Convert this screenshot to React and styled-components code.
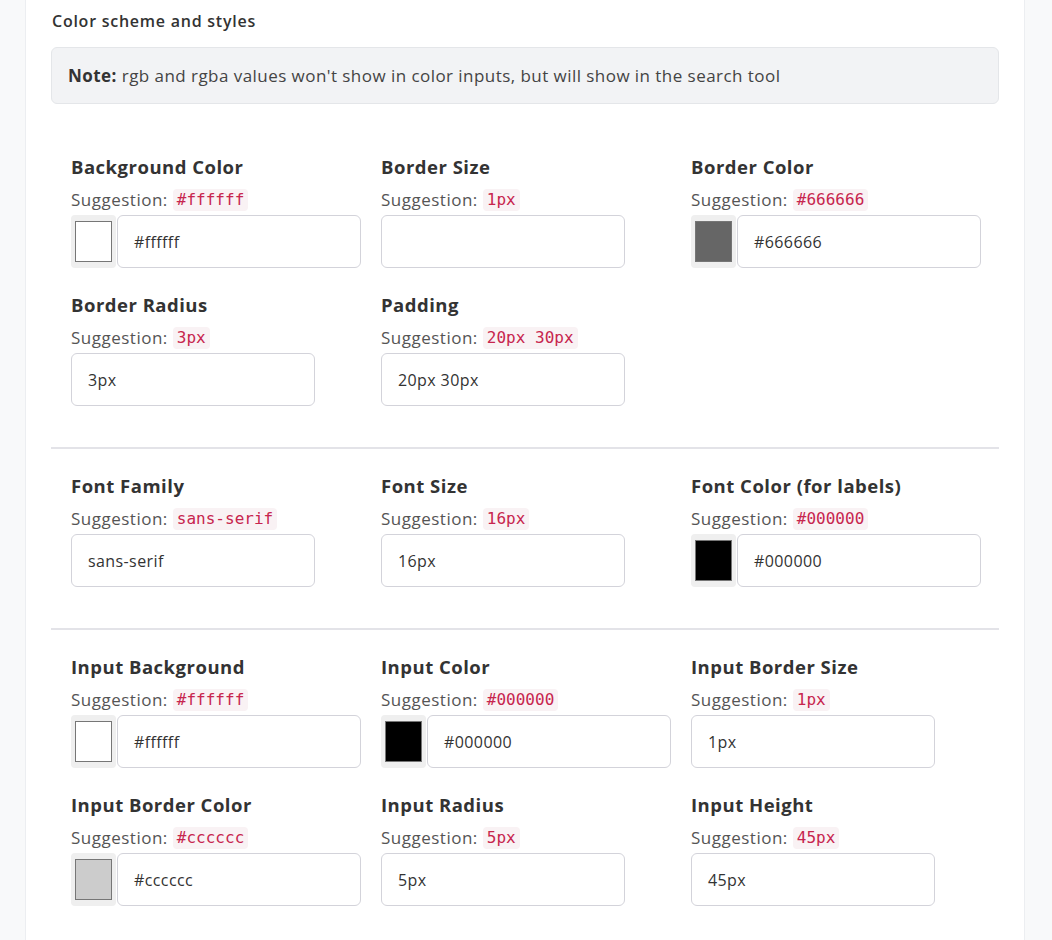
import styled, { createGlobalStyle } from "styled-components";

const GlobalStyle = createGlobalStyle`
  body {
    margin: 0;
    background: #f8f9fa;
    font-family: "Open Sans", "Liberation Sans", sans-serif;
    color: #333;
  }
`;

const Card = styled.div`
  margin-left: 25px;
  width: 1000px;
  min-height: 940px;
  box-sizing: border-box;
  background: #fff;
  border-left: 1px solid #eceef1;
  border-right: 1px solid #eceef1;
  padding: 9px 25px 0 25px;
`;

const Heading = styled.h3`
  margin: 0 0 14px 1px;
  font-size: 16px;
  line-height: 24px;
  font-weight: 600;
  letter-spacing: 0.75px;
  color: #333;
`;

const Note = styled.div`
  background: #f2f3f5;
  border: 1px solid #e4e6e9;
  border-radius: 6px;
  padding: 15px 16px;
  font-size: 17px;
  line-height: 25px;
  letter-spacing: 0.45px;
  color: #444;
  margin-bottom: 26px;

  b {
    font-weight: 700;
    color: #333;
  }
`;

const Section = styled.div`
  display: grid;
  grid-template-columns: repeat(3, 310px);
  row-gap: 25px;
  padding: 25px 20px 41px;
  border-bottom: ${(p) => (p.$last ? "none" : "2px solid #e3e3e8")};
`;

const Field = styled.div`
  display: flex;
  flex-direction: column;
`;

const Label = styled.div`
  font-size: 18.5px;
  line-height: 24px;
  font-weight: 700;
  letter-spacing: 0.5px;
  color: #333;
  margin-bottom: 9px;
`;

const Suggestion = styled.div`
  font-size: 17px;
  line-height: 24px;
  letter-spacing: 0.5px;
  color: #555;
  margin-bottom: 3px;
  display: flex;
  align-items: center;
  gap: 5px;
`;

const Code = styled.code`
  font-family: "DejaVu Sans Mono", "Liberation Mono", monospace;
  font-size: 16px;
  line-height: 22px;
  letter-spacing: 0;
  padding: 0 4px;
  border-radius: 4px;
  background: #f9f2f4;
  color: #c7254e;
`;

const InputRow = styled.div`
  display: flex;
  gap: 1px;
`;

const Swatch = styled.div`
  width: 45px;
  height: 53px;
  box-sizing: border-box;
  background: #efefef;
  border-radius: 4px;
  padding: 6px 4px;
`;

const SwatchFill = styled.div`
  width: 100%;
  height: 100%;
  box-sizing: border-box;
  border: 1px solid #767676;
  background: ${(p) => p.$color};
`;

const TextInput = styled.div`
  width: 244px;
  height: 53px;
  box-sizing: border-box;
  border: 1px solid #d3d3da;
  border-radius: 6px;
  padding: 0 16px;
  display: flex;
  align-items: center;
  font-size: 16px;
  letter-spacing: 0.4px;
  color: #333;
  background: #fff;
`;

const sections = [
  [
    { label: "Background Color", hint: "#ffffff", value: "#ffffff", color: "#ffffff" },
    { label: "Border Size", hint: "1px", value: "" },
    { label: "Border Color", hint: "#666666", value: "#666666", color: "#666666" },
    { label: "Border Radius", hint: "3px", value: "3px" },
    { label: "Padding", hint: "20px 30px", value: "20px 30px" },
  ],
  [
    { label: "Font Family", hint: "sans-serif", value: "sans-serif" },
    { label: "Font Size", hint: "16px", value: "16px" },
    { label: "Font Color (for labels)", hint: "#000000", value: "#000000", color: "#000000" },
  ],
  [
    { label: "Input Background", hint: "#ffffff", value: "#ffffff", color: "#ffffff" },
    { label: "Input Color", hint: "#000000", value: "#000000", color: "#000000" },
    { label: "Input Border Size", hint: "1px", value: "1px" },
    { label: "Input Border Color", hint: "#cccccc", value: "#cccccc", color: "#cccccc" },
    { label: "Input Radius", hint: "5px", value: "5px" },
    { label: "Input Height", hint: "45px", value: "45px" },
  ],
];

function StyleField({ field }) {
  return (
    <Field>
      <Label>{field.label}</Label>
      <Suggestion>
        Suggestion: <Code>{field.hint}</Code>
      </Suggestion>
      <InputRow>
        {field.color && (
          <Swatch>
            <SwatchFill $color={field.color} />
          </Swatch>
        )}
        <TextInput>{field.value}</TextInput>
      </InputRow>
    </Field>
  );
}

export default function App() {
  return (
    <>
      <GlobalStyle />
      <Card>
        <Heading>Color scheme and styles</Heading>
        <Note>
          <b>Note:</b> rgb and rgba values won't show in color inputs, but will show in the search tool
        </Note>
        {sections.map((fields, i) => (
          <Section key={`section-${i}`} $last={i === sections.length - 1}>
            {fields.map((f) => (
              <StyleField key={f.label} field={f} />
            ))}
          </Section>
        ))}
      </Card>
    </>
  );
}
